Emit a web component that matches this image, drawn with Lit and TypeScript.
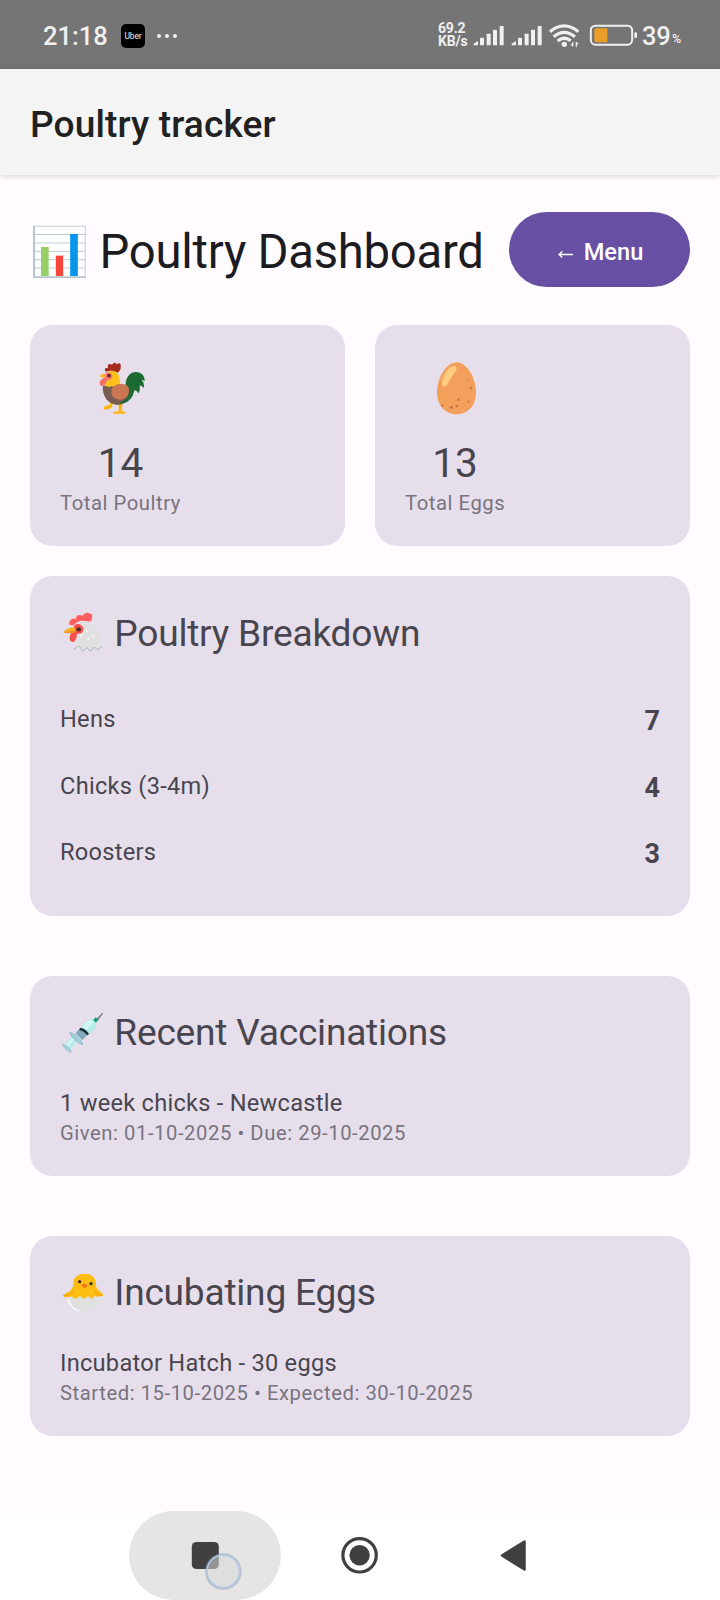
import { LitElement, html, css } from "lit";
import { customElement } from "lit/decorators.js";

const chart = html`<svg class="chart" viewBox="99 105 159 159">
  <rect x="101.5" y="108.5" width="154" height="153" fill="#fff" stroke="#b4c6d0" stroke-width="2.5" />
  <path d="M101 133.5H256M101 159H256M101 184H256M101 209H256M101 234H256" stroke="#b4c6d0" stroke-width="2.6" />
  <path d="M100 261.500H257" stroke="#a6bbc6" stroke-width="4" />
  <path d="M102.500 108V262" stroke="#a6bbc6" stroke-width="4" />
  <rect x="123" y="171" width="23" height="87" fill="#97d066" />
  <rect x="167.500" y="197" width="22" height="61" fill="#f8463a" />
  <rect x="210.500" y="132" width="23" height="126" fill="#0a95ec" />
</svg>`;

const rooster = html`<svg class="rooster" viewBox="234 123 144 162">
  <path d="M318 207C313 180 325 157 346 156C362 155 375 166 374 184C370 180 367 179 365 180C372 188 373 196 371 204C366 198 362 195 359 197C360 206 359 213 356 220C351 214 348 211 344 210C338 228 329 239 315 246Z" fill="#1c6b33" />
  <path d="M346 180C352 177 360 181 364 188M344 198C350 193 354 194 358 198" stroke="#17582d" stroke-width="2.500" fill="none" />
  <path d="M270 247L268 256C259 254 251 258 252 264L251 270L256 269L260 267L263 271L266 266L275 264L279 250Z" fill="#fdb714" />
  <path d="M296 248H307L306 272L315 276V281H279V276L296 273Z" fill="#fdb714" />
  <path d="M248 199C264 190 287 189 310 194C325 198 332 212 330 225C326 243 310 254 291 255C266 252 247 233 248 199Z" fill="#7b5c53" />
  <path d="M302 246C321 240 331 222 327 201C337 208 342 214 339 225C333 240 316 252 300 252Z" fill="#256b39" />
  <path d="M256 170C258 157 269 150 282 153C293 155 299 165 301 194C295 198 291 193 286 199C280 202 276 196 270 200C264 202 258 195 257 199C253 196 253 187 256 170Z" fill="#fcc21b" />
  <path d="M275 210C279 193 303 188 320 196C328 201 329 213 323 226C315 239 302 242 288 236C277 231 272 222 275 210Z" fill="#cc7654" />
  <path d="M257 155C252 148 255 142 264 145C260 134 269 128 276 135C280 126 289 126 290 134C297 126 304 131 302 139C304 147 299 153 294 158C280 150 269 151 257 155Z" fill="#a52b1f" />
  <path d="M240 166C246 161 252 160 258 164V173C250 174 245 171 240 170Z" fill="#fdb42a" />
  <path d="M257 159C264 153 276 158 277 169C277 178 269 181 262 178C261 190 250 202 242 197C235 190 239 177 257 172Z" fill="#f9706a" />
  <circle cx="267" cy="167" r="5" fill="#51201d" />
</svg>`;

const egg = html`<svg class="egg" viewBox="225 123 123 162">
  <path d="M287 127C318 127 345 175 345 217C345 257 321 283 287 283C252 283 228 257 228 217C228 174 256 127 287 127Z" fill="#f2a05b" />
  <path d="M244 195C240 178 257 143 278 138C286 137 289 142 286 149C278 162 268 174 260 192C255 203 247 203 244 195Z" fill="#ffcc80" />
  <g fill="#cc7444"><circle cx="321" cy="180" r="2.500" /><circle cx="330" cy="204" r="4" /><circle cx="292" cy="239" r="4" /><circle cx="322" cy="245" r="3" /><circle cx="287" cy="258" r="4" /><circle cx="271" cy="262" r="4.500" /><circle cx="245" cy="257" r="3.500" /></g>
</svg>`;

const hen = html`<svg class="emoji" viewBox="126 126 126 126">
  <path d="M157 166C173 149 202 148 218 164C235 179 239 205 245 227C239 230 236 229 233 239C228 234 223 228 217 234L209 242L200 232L189 242L179 230C174 229 171 233 166 235C171 219 174 207 169 190Z" fill="#e0e0e0" />
  <path d="M160 237C168 237 170 229 177 229C182 231 184 243 190 243C196 243 197 233 201 233C206 234 206 244 212 243C218 241 218 231 223 232C228 232 229 241 234 239C238 237 239 230 246 231" fill="none" stroke="#adb5b8" stroke-width="3" />
  <path d="M149 165C145 152 154 144 168 147C167 136 178 132 188 137C192 127 204 126 210 131C219 129 217 143 215 150C211 158 203 153 195 153C180 150 169 157 160 166Z" fill="#ff5d5e" />
  <path d="M164 164C174 158 190 164 190 178C190 189 181 193 171 191C170 203 167 216 157 216C147 214 147 201 153 190Z" fill="#f9504d" />
  <path d="M129 187C138 177 150 170 164 172L166 185C154 190 141 189 129 187Z" fill="#fbb32a" />
  <path d="M129 187C142 183 154 183 166 181V187C153 191 142 190 129 187Z" fill="#ef941f" />
  <circle cx="176" cy="178" r="6.500" fill="#422b2b" />
  <g stroke="#fafafa" stroke-width="4.500" stroke-linecap="round"><path d="M199 179L201 184M185 195L183 200M205 205L204 209M218 197L219 202" /></g>
</svg>`;

const syringe = html`<svg class="emoji" viewBox="126 126 126 126">
  <path d="M225 151L247 128L250 130L230 156Z" fill="#78828a" />
  <path d="M217 153L227 142L235 149L224 160Z" fill="#129c72" />
  <path d="M183 173L201 151L216 146L229 160L225 176L206 195Z" fill="#b5ebe9" />
  <path d="M189 169L203 153L214 150L220 158L199 181Z" fill="#d3f7f5" />
  <path d="M134 221L157 198L172 214L150 239Z" fill="#b5e8ea" />
  <path d="M139 223L157 204L162 209L146 228Z" fill="#daf7f8" />
  <path d="M166 190L181 175L204 193L187 211Z" fill="#82a9b8" />
  <path d="M180 174C190 174 202 182 207 192L201 196C195 187 187 182 178 180Z" fill="#172f36" />
  <path d="M149 188C160 187 184 209 188 222C184 229 151 198 149 188Z" fill="#9fcfdb" stroke="#76a7b8" stroke-width="2" />
  <path d="M128 223C138 225 151 237 154 246C147 248 128 231 128 223Z" fill="#a5d5dd" stroke="#83aebb" stroke-width="2" />
</svg>`;

const chick = html`<svg class="emoji" viewBox="126 126 126 126">
  <path d="M142 198C145 226 164 246 192 246C218 246 237 229 242 198Z" fill="#e0e0e0" />
  <path d="M145 207C149 225 162 238 176 243C160 239 145 222 145 207Z" fill="#fff" stroke="#fff" stroke-width="3" />
  <path d="M160 165C158 143 173 131 194 131C216 131 230 145 228 167C230 182 250 186 249 196C244 201 238 198 234 201L225 197L216 207L205 198L192 207L180 198L166 207L154 199C147 202 133 204 129 198C130 190 156 187 160 165Z" fill="#fdbd12" />
  <path d="M130 197C145 198 154 194 162 185M248 196C237 197 230 192 224 184" fill="none" stroke="#f7a516" stroke-width="4" />
  <circle cx="179" cy="155" r="5" fill="#3b302b" /><circle cx="213" cy="161" r="5" fill="#3b302b" />
  <path d="M184 166C190 157 199 159 202 168C199 175 188 177 184 166Z" fill="#f4791f" />
</svg>`;

const signal = html`<svg class="signal" viewBox="156 72 96 66">
  <g fill="#f0f0f0"><path d="M158 133V128L171 120V133Z" /><rect x="177" y="110" width="12" height="23" rx="2" /><rect x="197" y="98" width="12" height="35" rx="2" /><rect x="216" y="86" width="12" height="47" rx="2" /><rect x="236" y="75" width="12" height="58" rx="2" /></g>
</svg>`;

const wifi = html`<svg class="wifi" viewBox="384 66 99 75">
  <g fill="none" stroke="#f0f0f0" stroke-width="9.500"><path d="M390 92Q432 57 475 92" /><path d="M401 107Q432 81 465 107" /><path d="M413 120Q432 104 452 119" /></g>
  <circle cx="433" cy="130" r="8" fill="#f0f0f0" />
  <path d="M458 123V136M469 123V137" stroke="#f0f0f0" stroke-width="4" />
  <path d="M451 130L458 138V130ZM469 122L477 130H469Z" fill="#f0f0f0" />
</svg>`;

const battery = html`<svg class="battery" viewBox="507 69 147 69">
  <rect x="512.500" y="74" width="124" height="57" rx="14" fill="none" stroke="#f0f0f0" stroke-width="6" />
  <path d="M528 82H562V124H528Q523 124 523 119V87Q523 82 528 82Z" fill="#eb9f28" />
  <rect x="643" y="94" width="8" height="17" rx="3" fill="#f0f0f0" />
</svg>`;

const breakdown = [
  { label: "Hens", value: 7 },
  { label: "Chicks (3-4m)", value: 4 },
  { label: "Roosters", value: 3 },
];

@customElement("app-root")
export class AppRoot extends LitElement {
  static styles = css`
    :host { display: flex; flex-direction: column; height: 1600px; width: 720px; overflow: hidden; background: #fffbff; font-family: Roboto, "Noto Sans", sans-serif; color: #49454f; }
    * { box-sizing: border-box; }
    svg { display: block; flex: none; }
    .status { height: 69px; flex: none; background: #757575; color: #f0f0f0; display: flex; align-items: center; padding: 2px 38px 0 43px; }
    .time { font-size: 25.5px; font-weight: 500; line-height: 30px; width: 78px; padding-top: 1px; }
    .uber { width: 24px; height: 24px; border-radius: 5px; background: #000; color: #eee; font-size: 8.500px; line-height: 24px; text-align: center; letter-spacing: -0.2px; }
    .dots { display: flex; gap: 4.200px; margin-left: 11.500px; }
    .dot { width: 4px; height: 4px; border-radius: 50%; background: #f0f0f0; }
    .rate { margin-left: auto; width: 34px; font-size: 14px; line-height: 13.500px; font-weight: 700; white-space: nowrap; letter-spacing: -0.200px; padding-bottom: 1px; }
    .signal { width: 32px; height: 22px; margin-left: 1px; }
    .signal + .signal { margin-left: 6px; }
    .wifi { width: 33px; height: 25px; margin-left: 5px; }
    .battery { width: 49px; height: 23px; margin-left: 8px; }
    .level { font-size: 25.500px; line-height: 30px; font-weight: 500; margin-left: 4px; width: 30px; padding-top: 1px; letter-spacing: -0.300px; }
    .pct { font-size: 12.500px; line-height: 14px; font-weight: 500; padding-top: 7px; width: 10px; }
    .appbar { height: 106px; flex: none; background: #f4f4f4; padding: 32px 30px 0; box-shadow: 0 1px 6px rgba(0, 0, 0, 0.18); color: #212121; font-size: 37.125px; font-weight: 500; line-height: 47px; letter-spacing: 0.120px; }
    .content { flex: none; height: 1338px; padding: 37px 30px 0; display: flex; flex-direction: column; }
    .head { display: flex; height: 75px; align-items: center; padding-left: 3px; }
    .chart { width: 53px; height: 53px; margin-top: 4px; }
    .heading { color: #1c1b1f; font-size: 47.250px; line-height: 60px; margin-left: 13.500px; white-space: nowrap; padding-top: 5px; letter-spacing: -0.250px; }
    .menu { margin-left: auto; width: 181px; height: 75px; border-radius: 38px; background: #6750a4; color: #fff; display: flex; align-items: center; justify-content: center; gap: 11px; font-size: 23.625px; font-weight: 500; letter-spacing: 0; padding: 4px 0 0 2px; }
    .arrow { width: 15px; height: 9px; margin-top: 6px; }
    .stats { display: grid; grid-template-columns: 315px 315px; gap: 30px; margin-top: 38px; }
    .card { background: #e6dfeb; border-radius: 22.500px; padding: 30px; }
    .stat { height: 221px; display: flex; padding: 36px 30px 0; }
    .stack { display: flex; flex-direction: column; align-items: center; }
    .rooster { width: 48px; height: 54px; margin-left: 3px; }
    .egg { width: 41px; height: 54px; margin-left: 2px; }
    .number { font-size: 40.500px; line-height: 54px; padding-top: 21px; }
    .small { font-size: 20.250px; line-height: 27px; letter-spacing: 0.550px; color: #78737f; white-space: nowrap; }
    .block { margin-top: 30px; height: 339.500px; }
    .record { margin-top: 60px; height: 200px; }
    .title { display: flex; align-items: center; height: 54px; padding-left: 2px; gap: 10.300px; font-size: 37.125px; line-height: 47px; white-space: nowrap; letter-spacing: -0.230px; }
    .emoji { width: 42px; height: 42px; }
    .rows { margin-top: 25.500px; }
    .row { height: 66.700px; display: flex; align-items: center; justify-content: space-between; }
    .body { font-size: 23.625px; line-height: 33.750px; letter-spacing: 0.260px; white-space: nowrap; }
    .row .body { padding-top: 2px; }
    .value { font-size: 27px; line-height: 40px; font-weight: 700; padding-top: 4px; }
    .lines { margin-top: 27px; }
    .nav { height: 87px; flex: none; background: #fff; display: flex; align-items: flex-start; padding-left: 129px; }
    .recent { width: 152px; height: 89px; margin-top: -2px; border-radius: 45px; background: #e5e5e5; padding: 31px 0 0 62px; }
    .recenticon { width: 52px; height: 52px; }
    .home { width: 38px; height: 38px; margin: 23px 0 0 60px; }
    .back { width: 27px; height: 33px; margin: 26px 0 0 121px; }
  `;

  record(icon: unknown, title: string, name: string, dates: string) {
    return html`<section class="card record">
      <div class="title">${icon}<span>${title}</span></div>
      <div class="lines">
        <div class="body">${name}</div>
        <div class="small">${dates}</div>
      </div>
    </section>`;
  }

  stat(icon: unknown, count: number, label: string) {
    return html`<section class="card stat">
      <div class="stack">
        ${icon}
        <div class="number">${count}</div>
        <div class="small">${label}</div>
      </div>
    </section>`;
  }

  render() {
    return html`
      <div class="status">
        <div class="time">21:18</div>
        <div class="uber">Uber</div>
        <div class="dots"><i class="dot"></i><i class="dot"></i><i class="dot"></i></div>
        <div class="rate">69.2<br />KB/s</div>
        ${signal}${signal}${wifi}${battery}
        <div class="level">39</div>
        <div class="pct">%</div>
      </div>
      <header class="appbar">Poultry tracker</header>
      <main class="content">
        <div class="head">
          ${chart}
          <div class="heading">Poultry Dashboard</div>
          <div class="menu">
            <svg class="arrow" viewBox="0 0 15 9"><path d="M1 4.500H15M4.300 1.500L1 4.500L4.300 7.500" fill="none" stroke="#fff" stroke-width="1.300" /></svg>
            <span>Menu</span>
          </div>
        </div>
        <div class="stats">
          ${this.stat(rooster, 14, "Total Poultry")}
          ${this.stat(egg, 13, "Total Eggs")}
        </div>
        <section class="card block">
          <div class="title">${hen}<span>Poultry Breakdown</span></div>
          <div class="rows">
            ${breakdown.map((r) => html`<div class="row"><span class="body">${r.label}</span><span class="value">${r.value}</span></div>`)}
          </div>
        </section>
        ${this.record(syringe, "Recent Vaccinations", "1 week chicks - Newcastle", "Given: 01-10-2025 • Due: 29-10-2025")}
        ${this.record(chick, "Incubating Eggs", "Incubator Hatch - 30 eggs", "Started: 15-10-2025 • Expected: 30-10-2025")}
      </main>
      <nav class="nav">
        <div class="recent">
          <svg class="recenticon" viewBox="0 0 52 52">
            <rect x="0.800" y="0" width="27" height="27" rx="4.500" fill="#404040" />
            <circle cx="32.300" cy="29.500" r="17" fill="#d9d9d9" fill-opacity="0.550" stroke="#8e9db5" stroke-opacity="0.500" stroke-width="2.600" />
            <circle cx="32.300" cy="29.300" r="16.300" fill="none" stroke="#b3c9e8" stroke-width="1.500" />
          </svg>
        </div>
        <svg class="home" viewBox="0 0 38 38"><circle cx="18.600" cy="19.300" r="16.700" fill="none" stroke="#404040" stroke-width="3.200" /><circle cx="18.600" cy="19.300" r="10.200" fill="#404040" /></svg>
        <svg class="back" viewBox="0 0 27 33"><path d="M2 16.500L24.500 2.500V30.500Z" fill="#404040" stroke="#404040" stroke-width="2.500" stroke-linejoin="round" /></svg>
      </nav>
    `;
  }
}
